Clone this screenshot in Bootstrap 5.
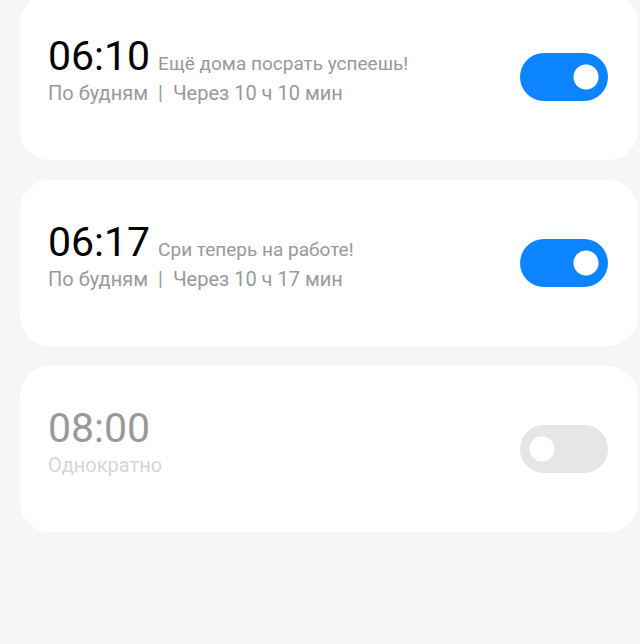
<!DOCTYPE html>
<html lang="ru">
<head>
<meta charset="utf-8">
<meta name="viewport" content="width=device-width, initial-scale=1">
<title>Будильник</title>
<link href="https://cdn.jsdelivr.net/npm/bootstrap@5.3.0/dist/css/bootstrap.min.css" rel="stylesheet">
<style>
body { background: #f6f6f6; font-family: Roboto, sans-serif; }
.alarm-list { padding: 0 2px 20px 20px; margin-top: -6px; gap: 20px; }
.alarm { background: #fff; border-radius: 30px; padding: 0 30px 0 28px; }
.alarm-label { padding: 38px 0 54px; }
.alarm-time { font-size: 41px; line-height: 48px; color: #000; }
.alarm-name { font-size: 19px; line-height: 26px; color: #999; }
.alarm-info { font-size: 20px; line-height: 26px; color: #999; }
.alarm-parts { gap: 10px; }
.alarm-off .alarm-time { color: #999; }
.alarm-off .alarm-info { color: #d6d6d6; }
.alarm-switch.form-check-input {
  width: 88px; height: 48px; border: 0; border-radius: 24px; background-color: #e6e6e6;
  background-image: radial-gradient(circle at 22px 24px, #fff 12px, transparent 13px);
  background-size: 100% 100%; background-position: 0 0;
}
.alarm-switch.form-check-input:checked {
  background-color: #0d84ff;
  background-image: radial-gradient(circle at 66px 24px, #fff 12px, transparent 13px);
}
</style>
</head>
<body>
<main class="alarm-list d-flex flex-column">
  <section class="alarm d-flex align-items-center justify-content-between">
    <label class="alarm-label" for="alarm1">
      <span class="d-flex align-items-baseline gap-2"><span class="alarm-time">06:10</span><span class="alarm-name">Ещё дома посрать успеешь!</span></span>
      <span class="alarm-info alarm-parts d-flex"><span>По будням</span><span>|</span><span>Через 10 ч 10 мин</span></span>
    </label>
    <input class="form-check-input alarm-switch m-0 flex-shrink-0" type="checkbox" role="switch" id="alarm1" checked>
  </section>
  <section class="alarm d-flex align-items-center justify-content-between">
    <label class="alarm-label" for="alarm2">
      <span class="d-flex align-items-baseline gap-2"><span class="alarm-time">06:17</span><span class="alarm-name">Сри теперь на работе!</span></span>
      <span class="alarm-info alarm-parts d-flex"><span>По будням</span><span>|</span><span>Через 10 ч 17 мин</span></span>
    </label>
    <input class="form-check-input alarm-switch m-0 flex-shrink-0" type="checkbox" role="switch" id="alarm2" checked>
  </section>
  <section class="alarm alarm-off d-flex align-items-center justify-content-between">
    <label class="alarm-label" for="alarm3">
      <span class="alarm-time d-block">08:00</span>
      <span class="alarm-info d-block">Однократно</span>
    </label>
    <input class="form-check-input alarm-switch m-0 flex-shrink-0" type="checkbox" role="switch" id="alarm3">
  </section>
</main>
<script src="https://cdn.jsdelivr.net/npm/bootstrap@5.3.0/dist/js/bootstrap.bundle.min.js"></script>
</body>
</html>
